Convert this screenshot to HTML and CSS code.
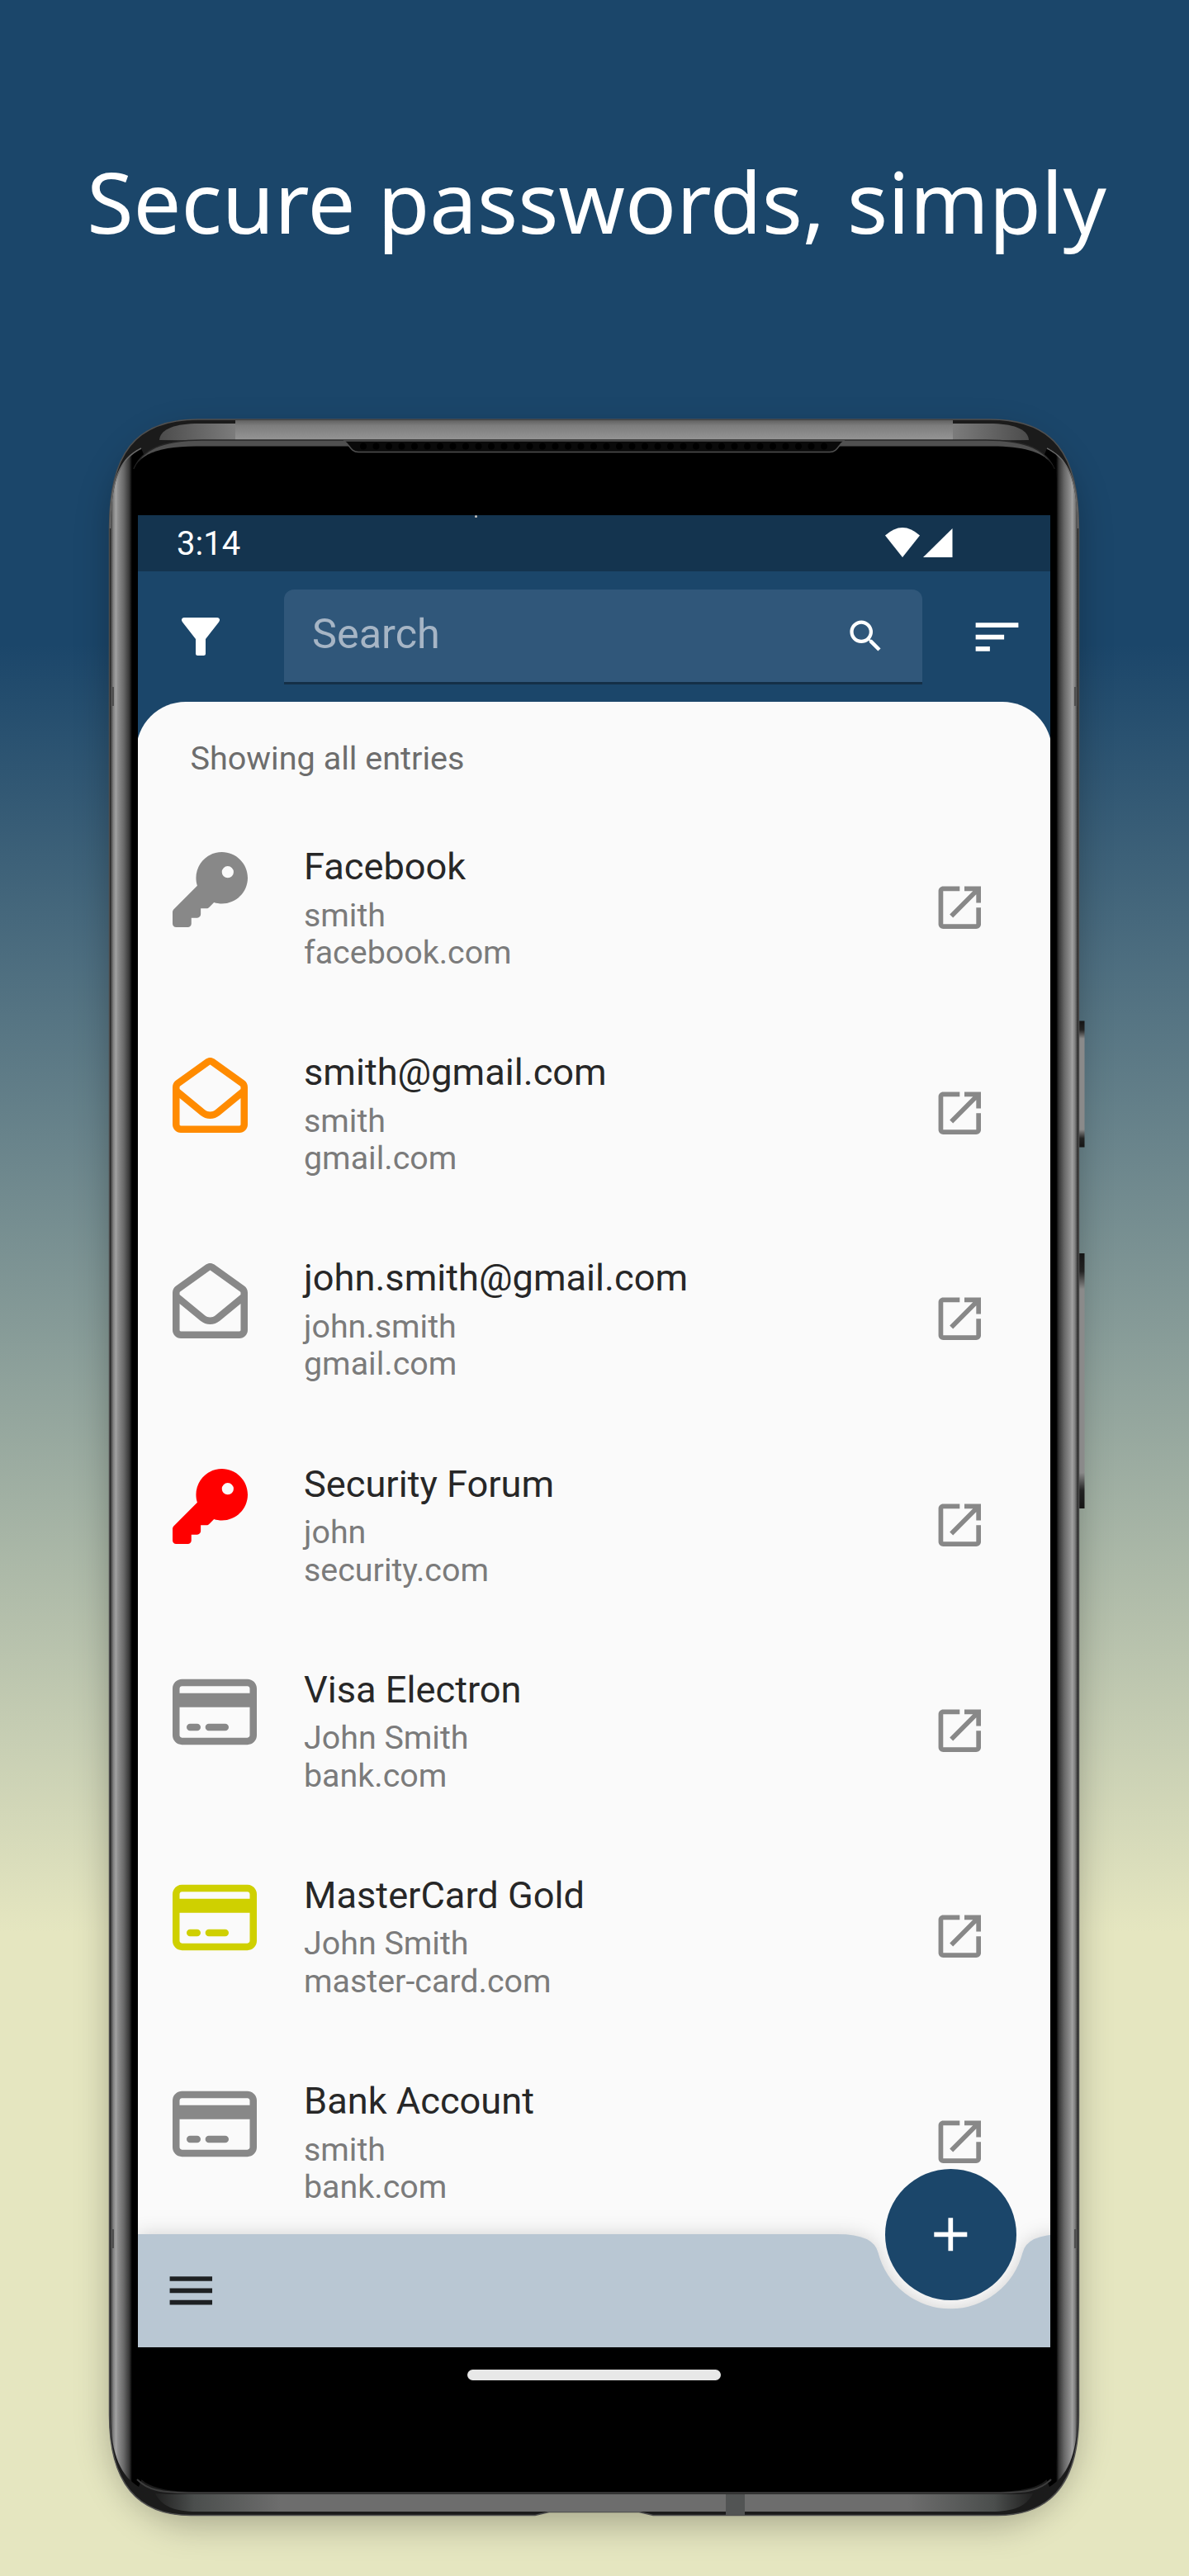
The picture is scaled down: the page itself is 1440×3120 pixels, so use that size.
FILE: index.html
```html
<!DOCTYPE html>
<html lang="en">
<head>
<meta charset="utf-8">
<title>Secure passwords, simply</title>
<link rel="stylesheet" href="styles.css">
</head>
<body>
<svg class="defs" width="0" height="0" aria-hidden="true">
  <symbol id="key" viewBox="0 0 512 512"><path d="M336 352c97.2 0 176-78.8 176-176S433.2 0 336 0S160 78.8 160 176c0 18.7 2.9 36.8 8.3 53.7L7 391c-4.5 4.5-7 10.6-7 17v80c0 13.3 10.7 24 24 24h80c13.3 0 24-10.7 24-24V448h40c13.3 0 24-10.7 24-24V384h40c6.4 0 12.5-2.5 17-7l33.3-33.3c16.9 5.4 35 8.3 53.7 8.3zM376 96a40 40 0 1 1 0 80 40 40 0 1 1 0-80z"/></symbol>
  <symbol id="mail" viewBox="0 0 512 512"><path d="M255.4 48.2c.2-.1 .4-.2 .6-.2s.4 .1 .6 .2L460.6 194c2.1 1.5 3.4 3.9 3.4 6.5v13.6L291.5 355.7c-20.7 17-50.4 17-71.1 0L48 214.1V200.5c0-2.6 1.2-5 3.4-6.5L255.4 48.2zM48 276.2L190 392.8c38.4 31.5 93.7 31.5 132 0L464 276.2V456c0 4.4-3.6 8-8 8H56c-4.4 0-8-3.6-8-8V276.2zM256 0c-10.2 0-20.2 3.2-28.5 9.1L23.5 154.9C8.7 165.4 0 182.4 0 200.5V456c0 30.9 25.1 56 56 56H456c30.9 0 56-25.1 56-56V200.5c0-18.1-8.7-35.1-23.4-45.6L284.5 9.1C276.2 3.2 266.2 0 256 0z"/></symbol>
  <symbol id="card" viewBox="0 0 576 512"><path d="M512 80c8.8 0 16 7.2 16 16v32H48V96c0-8.8 7.2-16 16-16H512zm16 144V416c0 8.8-7.2 16-16 16H64c-8.8 0-16-7.2-16-16V224H528zM64 32C28.7 32 0 60.7 0 96V416c0 35.3 28.7 64 64 64H512c35.3 0 64-28.7 64-64V96c0-35.3-28.7-64-64-64H64zm56 304c-13.3 0-24 10.7-24 24s10.7 24 24 24h48c13.3 0 24-10.7 24-24s-10.7-24-24-24H120zm128 0c-13.3 0-24 10.7-24 24s10.7 24 24 24H360c13.3 0 24-10.7 24-24s-10.7-24-24-24H248z"/></symbol>
  <symbol id="open" viewBox="0 0 24 24"><path d="M19 19H5V5h7V3H5c-1.11 0-2 .9-2 2v14c0 1.1.89 2 2 2h14c1.1 0 2-.9 2-2v-7h-2v7zM14 3v2h3.59l-9.83 9.83 1.41 1.41L19 6.41V10h2V3h-7z"/></symbol>
</svg>

<h1 class="headline">Secure passwords, simply</h1>

<main class="phone">
  <svg class="frame" viewBox="120 495 1200 2570" aria-hidden="true">
    <defs>
      <linearGradient id="side" x1="132" x2="162" y1="0" y2="0" gradientUnits="userSpaceOnUse">
        <stop offset="0" stop-color="#3c3c3c"/><stop offset=".1" stop-color="#4a4a4a"/><stop offset=".16" stop-color="#7c7c7c"/><stop offset=".28" stop-color="#a2a2a2"/><stop offset=".36" stop-color="#8e8e8e"/><stop offset=".6" stop-color="#686868"/><stop offset=".82" stop-color="#363636"/><stop offset=".93" stop-color="#000"/>
      </linearGradient>
      <linearGradient id="top" x1="0" x2="0" y1="508" y2="533" gradientUnits="userSpaceOnUse">
        <stop offset="0" stop-color="#5c5c5c"/><stop offset=".3" stop-color="#7d7d7d"/><stop offset="1" stop-color="#959595"/>
      </linearGradient>
      <linearGradient id="topEnd" x1="190" x2="285" y1="0" y2="0" gradientUnits="userSpaceOnUse">
        <stop offset="0" stop-color="#4a4a4a"/><stop offset="1" stop-color="#7c7c7c"/>
      </linearGradient>
      <linearGradient id="bottomEnd" x1="190" x2="340" y1="0" y2="0" gradientUnits="userSpaceOnUse">
        <stop offset="0" stop-color="#222"/><stop offset=".3" stop-color="#4b4e4d"/><stop offset="1" stop-color="#6d6d6d"/>
      </linearGradient>
      <linearGradient id="button" x1="0" x2="0" y1="0" y2="1">
        <stop offset="0" stop-color="#151515"/><stop offset=".07" stop-color="#222"/><stop offset=".14" stop-color="#8a8a8a"/><stop offset=".86" stop-color="#8a8a8a"/><stop offset=".93" stop-color="#222"/><stop offset="1" stop-color="#151515"/>
      </linearGradient>
      <g id="half">
        <path d="M134 640C134 580 148 550 171 543L176 555L176 2992L168 3012C148 3000 134 2975 134 2925Z" fill="url(#side)"/>
        <path d="M133.5 640C133.5 580 146 555 171 543" fill="none" stroke="#6a6a6a" stroke-width="1.5"/>
        <path d="M193 533C194 521 208 514 236 513H286V534Z" fill="url(#topEnd)"/>
        <path d="M188 3020C196 3036 212 3042 238 3042H720V3021H230C212 3021 200 3021 188 3020Z" fill="url(#bottomEnd)"/>
        <path d="M134 832H138V855H134ZM134 2700H138V2723H134Z" fill="#505050"/>
      </g>
    </defs>
    <rect x="1304" y="1236.500" width="9.500" height="153" fill="url(#button)"/>
    <rect x="1304" y="1518" width="9.500" height="309" fill="url(#button)"/>
    <path d="M132.500 640C132.500 550 163 508 240 508H1199C1276 508 1306.500 550 1306.500 640V2925C1306.500 3005 1275 3046.500 1208 3046.500H791L774 3042.500H665L648 3046.500H231C164 3046.500 132.500 3005 132.500 2925Z" fill="#1b1b1b" stroke="#505050" stroke-width="1.500"/>
    <use href="#half"/>
    <use href="#half" transform="matrix(-1 0 0 1 1439 0)"/>
    <rect x="285" y="509" width="869" height="24" fill="url(#top)"/>
    <path d="M162 568C172 545 195 533 245 533H1194C1244 533 1267 545 1277 568" fill="#505050" stroke="#262626" stroke-width="1.500"/>
    <path d="M160 2972V580C161 554 184 540.500 238 540.500H1201C1255 540.500 1278 554 1279.500 580V2972C1279.500 3003 1262 3018 1203 3018H236C177 3018 160 3003 160 2972Z" fill="#000"/>
    <path d="M166 3003C178 3015 192 3019.500 236 3019.500H1203C1247 3019.500 1261 3015 1273 3003" fill="none" stroke="#3d3d3d" stroke-width="2"/>
    <path d="M416 534C424 538 424 547.500 434 547.500H1005C1015 547.500 1015 538 1023 534Z" fill="#0a0a0a" stroke="#505050" stroke-width="1.500"/>
    <path d="M440 540.500H1000" stroke="#000" stroke-width="8" stroke-linecap="round" stroke-dasharray="0 15.500"/>
    <rect x="879" y="3021" width="23" height="25" fill="#525454"/>
  </svg>

  <div class="screen">
    <div class="status">
      <span class="clock">3:14</span>
      <svg class="signals" viewBox="0 0 82 36"><path d="M0 8.600Q21-10.600 42 8.600L21 35Z"/><path d="M81.500 0V35H46Z"/></svg>
    </div>
    <header class="appbar">
      <svg class="filter" viewBox="0 0 46 46"><path d="M3 0H43C46 0 47 3 45 5.500L29 26V43.500Q29 46 26.500 46H19.500Q17 46 17 43.500V26L1 5.500C-1 3 0 0 3 0Z"/></svg>
      <div class="search">
        <span>Search</span>
        <svg class="magnifier" viewBox="0 0 24 24"><path d="M15.500 14h-.79l-.28-.27C15.410 12.590 16 11.110 16 9.500 16 5.910 13.090 3 9.500 3S3 5.910 3 9.500 5.910 16 9.500 16c1.610 0 3.090-.59 4.230-1.570l.27.28v.79l5 4.990L20.490 19l-4.990-5zm-6 0C7.010 14 5 11.990 5 9.500S7.010 5 9.500 5 14 7.010 14 9.500 11.990 14 9.500 14z"/></svg>
      </div>
      <svg class="sort" viewBox="0 0 24 24"><path d="M3 18h6v-2H3v2zM3 6v2h18V6H3zm0 7h12v-2H3v2z"/></svg>
    </header>
    <section class="sheet">
      <p class="summary">Showing all entries</p>
      <ul class="entries">
        <li class="entry"><svg class="kind"><use href="#key"/></svg><div class="text"><h2>Facebook</h2><p>smith</p><p>facebook.com</p></div><svg class="open"><use href="#open"/></svg></li>
        <li class="entry"><svg class="kind orange"><use href="#mail"/></svg><div class="text"><h2>smith@gmail.com</h2><p>smith</p><p>gmail.com</p></div><svg class="open"><use href="#open"/></svg></li>
        <li class="entry"><svg class="kind"><use href="#mail"/></svg><div class="text"><h2>john.smith@gmail.com</h2><p>john.smith</p><p>gmail.com</p></div><svg class="open"><use href="#open"/></svg></li>
        <li class="entry"><svg class="kind red"><use href="#key"/></svg><div class="text"><h2>Security Forum</h2><p>john</p><p>security.com</p></div><svg class="open"><use href="#open"/></svg></li>
        <li class="entry"><svg class="kind wide"><use href="#card"/></svg><div class="text"><h2>Visa Electron</h2><p>John Smith</p><p>bank.com</p></div><svg class="open"><use href="#open"/></svg></li>
        <li class="entry"><svg class="kind wide gold"><use href="#card"/></svg><div class="text"><h2>MasterCard Gold</h2><p>John Smith</p><p>master-card.com</p></div><svg class="open"><use href="#open"/></svg></li>
        <li class="entry"><svg class="kind wide"><use href="#card"/></svg><div class="text"><h2>Bank Account</h2><p>smith</p><p>bank.com</p></div><svg class="open"><use href="#open"/></svg></li>
      </ul>
    </section>
    <nav class="bottombar">
      <svg class="notched" viewBox="0 0 1105 136" aria-hidden="true"><path d="M0 0H848Q891 0 896.500 22.300A90.300 90.300 0 0 0 1071.500 22.300Q1077 0 1120 0V137H0Z"/></svg>
      <svg class="menu" viewBox="0 0 24 24"><path d="M3 18h18v-2H3v2zm0-5h18v-2H3v2zm0-7v2h18V6H3z"/></svg>
      <button class="fab" aria-label="Add entry"><svg viewBox="0 0 24 24"><path d="M19 13h-6v6h-2v-6H5v-2h6V5h2v6h6v2z"/></svg></button>
    </nav>
  </div>
  <div class="home"></div>
</main>
</body>
</html>
```
FILE: styles.css
```css
* { box-sizing: border-box; margin: 0; padding: 0; }

body {
  width: 1440px;
  height: 3120px;
  overflow: hidden;
  background: linear-gradient(#1b466a 25%, #e5e6c0 75%);
  font-family: Roboto, "Liberation Sans", sans-serif;
}

.defs { position: absolute; }
svg { display: block; flex: none; fill: currentColor; }

.headline {
  height: 508px;
  padding: 173px 0 0 5px;
  color: #fff;
  font: 400 102.7px/140px "Noto Sans", "Open Sans", sans-serif;
  text-align: center;
  white-space: nowrap;
}

.phone {
  position: relative;
  width: 1174px;
  height: 2535px;
  margin-left: 132px;
  padding: 116px 35px 0;
  border-radius: 105px / 118px;
  box-shadow: 0 16px 40px rgba(0, 0, 0, .26);
}

.frame {
  position: absolute;
  left: -12px;
  top: -13px;
  width: 1200px;
  height: 2570px;
}

.screen {
  position: relative;
  display: flex;
  flex-direction: column;
  width: 1105px;
  height: 2218.500px;
  overflow: hidden;
  background: #1b466a;
}

.status {
  position: relative;
  display: flex;
  align-items: center;
  justify-content: space-between;
  height: 67.500px;
  padding: 0 118px 0 47px;
  background: #14344f;
  color: #fff;
}
/* camera sensor glint on the bezel edge */
.status::before {
  content: "";
  position: absolute;
  left: 408px;
  top: 0;
  width: 3px;
  height: 3px;
  border-radius: 50%;
  background: #c8c4c0;
}
.clock { font-size: 40px; line-height: 66px; padding-top: 3px; }
.signals { width: 82px; height: 36px; overflow: visible; }

.appbar {
  display: flex;
  align-items: center;
  flex: none;
  height: 158.500px;
  padding: 0 30px 0 53px;
  color: #fff;
}
.filter { width: 46px; height: 46px; }
.search {
  display: flex;
  align-items: center;
  justify-content: space-between;
  width: 773px;
  height: 115px;
  margin: 2px 56px 0 78px;
  padding: 0 43px 8px 34px;
  border-bottom: 3px solid #142f47;
  border-radius: 12px 12px 0 0;
  background: #30577a;
}
.search span { padding-top: 3px; color: #a6b5c5; font-size: 50.400px; }
.magnifier { width: 51px; height: 51px; margin-top: 8px; }
.sort { width: 69px; height: 69px; margin-top: 1px; }

.sheet {
  flex: 1;
  min-height: 0;
  margin: 0 -2px;
  padding: 45px 2px 0;
  border-radius: 60px 60px 0 0;
  background: #fafafa;
}
.summary {
  height: 136.500px;
  padding-left: 63.500px;
  color: #6d6d6d;
  font-size: 39.600px;
  line-height: 48px;
}
.entries { list-style: none; }
.entry {
  display: flex;
  height: 249.200px;
  padding: 0 75.500px 0 41.500px;
  color: #888;
}
.kind { width: 91px; height: 91px; margin-right: 68.500px; }
.wide { width: 102px; margin-right: 57.500px; }
.orange { color: #ff8b00; }
.red { color: #f00; }
.gold { color: #cfd000; }
.text { flex: 1; }
.text h2 {
  margin: -8.500px 0 8.500px;
  color: #272727;
  font-size: 45.200px;
  font-weight: 400;
  line-height: 54px;
}
.text p { color: #7b7b7b; font-size: 39.400px; line-height: 45.500px; }
.open { width: 68.600px; height: 68.600px; margin-top: 33.500px; }

.bottombar {
  position: absolute;
  left: 0;
  right: 0;
  bottom: 0;
  display: flex;
  align-items: center;
  height: 136.500px;
  padding-left: 30px;
}
.notched {
  position: absolute;
  inset: 0;
  width: 1105px;
  height: 136px;
  overflow: visible;
  color: #b9c7d3;
  filter: drop-shadow(0 0 11px rgba(0, 0, 0, .16));
}
.menu { position: relative; width: 68.600px; height: 68.600px; color: #1e2123; }
.fab {
  position: absolute;
  left: 904.500px;
  top: -79.500px;
  display: grid;
  place-items: center;
  width: 159px;
  height: 159px;
  border: 0;
  border-radius: 50%;
  background: #1b466a;
  color: #fff;
}
.fab svg { width: 68.600px; height: 68.600px; }

.home {
  position: relative;
  width: 307px;
  height: 13px;
  margin: 27px auto 0;
  border-radius: 7px;
  background: #e8e8e8;
}
```
